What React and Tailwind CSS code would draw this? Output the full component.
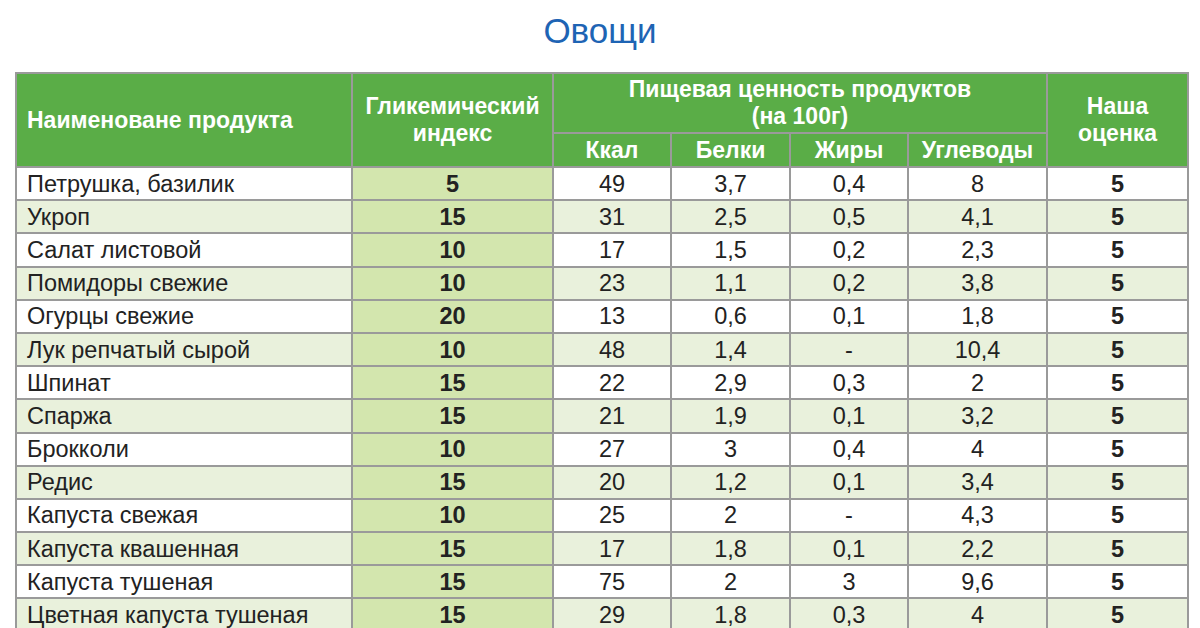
import React from "react";

const rows = [
  ["Петрушка, базилик", "5", "49", "3,7", "0,4", "8", "5"],
  ["Укроп", "15", "31", "2,5", "0,5", "4,1", "5"],
  ["Салат листовой", "10", "17", "1,5", "0,2", "2,3", "5"],
  ["Помидоры свежие", "10", "23", "1,1", "0,2", "3,8", "5"],
  ["Огурцы свежие", "20", "13", "0,6", "0,1", "1,8", "5"],
  ["Лук репчатый сырой", "10", "48", "1,4", "-", "10,4", "5"],
  ["Шпинат", "15", "22", "2,9", "0,3", "2", "5"],
  ["Спаржа", "15", "21", "1,9", "0,1", "3,2", "5"],
  ["Брокколи", "10", "27", "3", "0,4", "4", "5"],
  ["Редис", "15", "20", "1,2", "0,1", "3,4", "5"],
  ["Капуста свежая", "10", "25", "2", "-", "4,3", "5"],
  ["Капуста квашенная", "15", "17", "1,8", "0,1", "2,2", "5"],
  ["Капуста тушеная", "15", "75", "2", "3", "9,6", "5"],
  ["Цветная капуста тушеная", "15", "29", "1,8", "0,3", "4", "5"],
];

const th = "border-2 border-[#9a9a9a] bg-[#5aad47] text-white font-bold text-[23px] leading-[27px] p-0";
const td = "border-2 border-[#9a9a9a] text-[23.5px] leading-[26px] text-[#222] p-0";

export default function App() {
  return (
    <div
      className="w-[1200px] h-[628px] overflow-hidden bg-white"
      style={{ fontFamily: '"Liberation Sans", Arial, sans-serif' }}
    >
      <h1 className="text-center text-[35px] leading-[40px] text-[#1e64b4] pt-[11px] h-[72px]">
        Овощи
      </h1>
      <table className="ml-[15px] border-collapse table-fixed w-[1172px]">
        <colgroup>
          <col className="w-[336px]" />
          <col className="w-[201px]" />
          <col className="w-[118px]" />
          <col className="w-[119px]" />
          <col className="w-[118px]" />
          <col className="w-[139px]" />
          <col className="w-[141px]" />
        </colgroup>
        <thead>
          <tr className="h-[60px]">
            <th rowSpan={2} className={`${th} text-left pl-[10px]`}>
              Наименоване продукта
            </th>
            <th rowSpan={2} className={th}>
              Гликемический
              <br />
              индекс
            </th>
            <th colSpan={4} className={th}>
              Пищевая ценность продуктов
              <br />
              (на 100г)
            </th>
            <th rowSpan={2} className={th}>
              Наша
              <br />
              оценка
            </th>
          </tr>
          <tr className="h-[34px]">
            <th className={th}>Ккал</th>
            <th className={th}>Белки</th>
            <th className={th}>Жиры</th>
            <th className={th}>Углеводы</th>
          </tr>
        </thead>
        <tbody>
          {rows.map((r, i) => (
            <tr
              key={r[0]}
              className={`h-[33.2px] ${i % 2 ? "bg-[#e9f1dc]" : "bg-white"}`}
            >
              <td className={`${td} pl-[10px]`}>{r[0]}</td>
              <td className={`${td} text-center font-bold bg-[#d3e6ae]`}>{r[1]}</td>
              <td className={`${td} text-center`}>{r[2]}</td>
              <td className={`${td} text-center`}>{r[3]}</td>
              <td className={`${td} text-center`}>{r[4]}</td>
              <td className={`${td} text-center`}>{r[5]}</td>
              <td className={`${td} text-center font-bold`}>{r[6]}</td>
            </tr>
          ))}
        </tbody>
      </table>
    </div>
  );
}
